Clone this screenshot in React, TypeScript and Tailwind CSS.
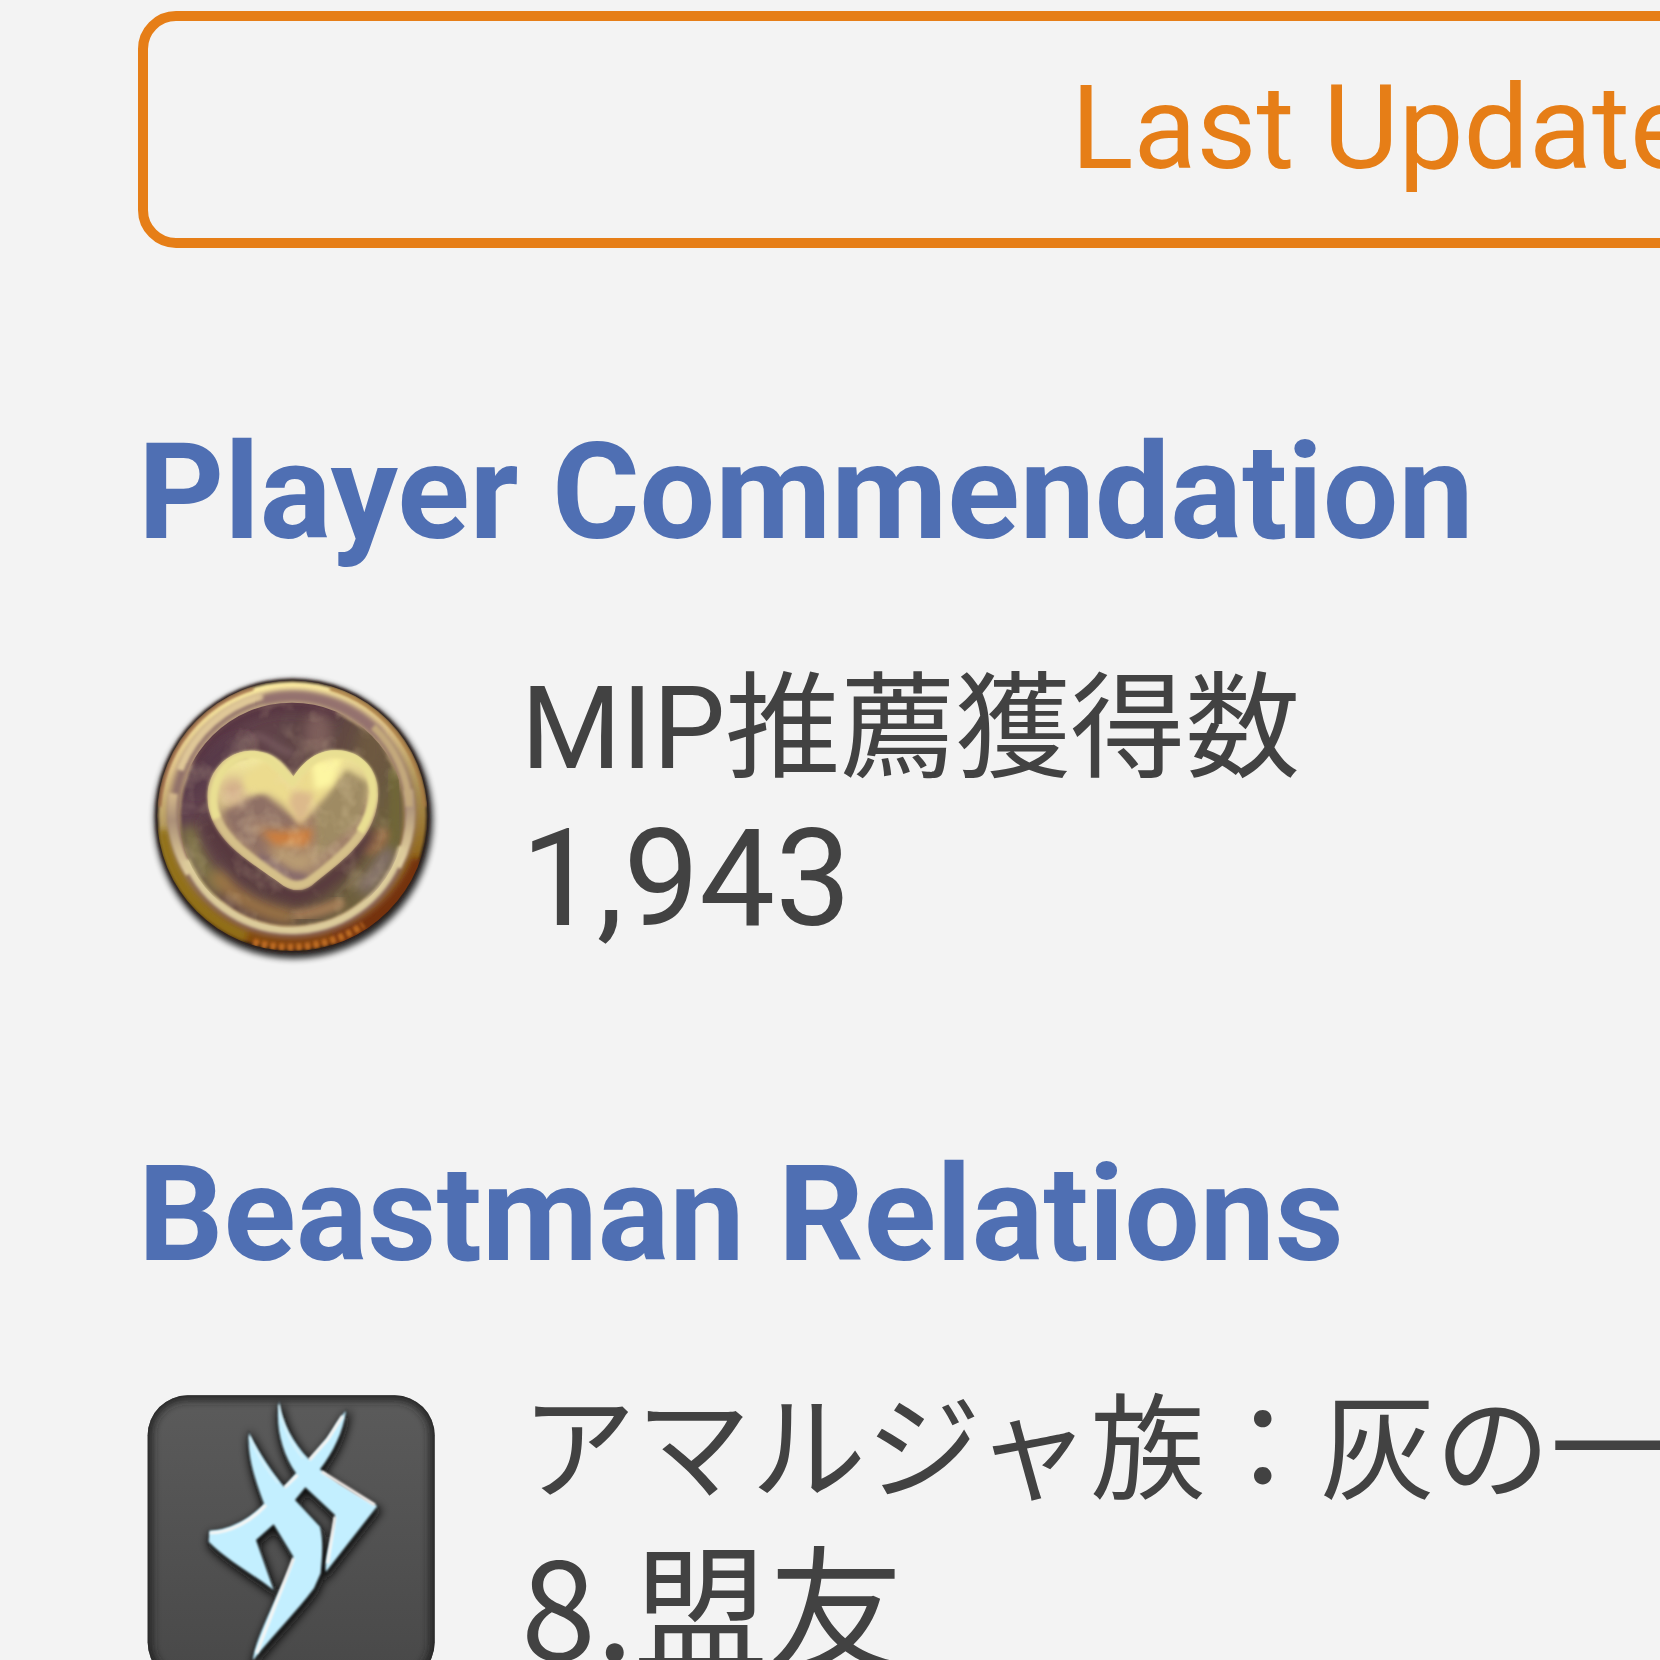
import type { ReactNode } from "react"

interface SectionProps {
  title: string;
  children: ReactNode;
}

interface EntryProps {
  icon: ReactNode;
  label: string;
  value: string;
  japaneseValue?: boolean;
}

const HEART = "M490 350 C460 300 420 270 360 272 C285 276 232 340 232 410 C234 540 355 600 460 677 Q505 705 545 677 C640 600 745 530 745 400 C745 325 690 270 620 270 C560 270 520 305 490 350Z"

const CommendationIcon = () => (
  <svg viewBox="51 39 864 864" className="w-full h-full overflow-visible" aria-hidden="true">
    <defs>
      <linearGradient id="rim" x1="0.4" y1="0" x2="0.6" y2="1">
        <stop offset="0" stopColor="#fff0a4" />
        <stop offset="0.25" stopColor="#e2c78c" />
        <stop offset="0.5" stopColor="#a98f52" />
        <stop offset="0.75" stopColor="#8f6419" />
        <stop offset="1" stopColor="#7d390b" />
      </linearGradient>
      <linearGradient id="ring" x1="0" y1="0" x2="0.2" y2="1">
        <stop offset="0" stopColor="#d9bd8d" />
        <stop offset="0.35" stopColor="#ab9078" />
        <stop offset="0.7" stopColor="#cdb78c" />
        <stop offset="1" stopColor="#e2cfa0" />
      </linearGradient>
      <linearGradient id="field" x1="0.1" y1="0.2" x2="1" y2="0.6">
        <stop offset="0" stopColor="#5f404e" />
        <stop offset="0.5" stopColor="#604644" />
        <stop offset="1" stopColor="#71653c" />
      </linearGradient>
      <linearGradient id="heart" x1="0.4" y1="0" x2="0.5" y2="1">
        <stop offset="0" stopColor="#f7eea0" />
        <stop offset="0.3" stopColor="#dcc98a" />
        <stop offset="0.5" stopColor="#a28268" />
        <stop offset="1" stopColor="#a0826d" />
      </linearGradient>
      <filter id="soft4" x="-20%" y="-20%" width="140%" height="140%"><feGaussianBlur stdDeviation="4" /></filter>
      <filter id="soft10" x="-30%" y="-30%" width="160%" height="160%"><feGaussianBlur stdDeviation="10" /></filter>
      <filter id="soft18" x="-50%" y="-50%" width="200%" height="200%"><feGaussianBlur stdDeviation="18" /></filter>
      <filter id="grain" x="0" y="0" width="100%" height="100%">
        <feTurbulence type="fractalNoise" baseFrequency="0.013" numOctaves="3" seed="4" />
        <feColorMatrix values="0 0 0 0 0.9  0 0 0 0 0.75  0 0 0 0 0.45  3 0 0 0 -1.45" />
      </filter>
      <clipPath id="coinClip"><circle cx="487" cy="467" r="406" /></clipPath>
      <clipPath id="fieldClip"><circle cx="486" cy="466" r="338" /></clipPath>
      <clipPath id="heartClip"><path d={HEART} /></clipPath>
    </defs>
    <circle cx="491" cy="478" r="418" fill="#000" opacity="0.8" filter="url(#soft10)" />
    <circle cx="487" cy="467" r="411" fill="#2b1d18" filter="url(#soft4)" />
    <g clipPath="url(#coinClip)">
      <circle cx="487" cy="467" r="402" fill="url(#rim)" filter="url(#soft4)" />
      <path d="M100 510 A390 390 0 0 0 350 830" fill="none" stroke="#927113" strokeWidth="34" filter="url(#soft10)" />
      <path d="M872 600 A390 390 0 0 1 610 842" fill="none" stroke="#74300e" strokeWidth="54" filter="url(#soft10)" />
      <path d="M370 846 A398 398 0 0 0 700 795" fill="none" stroke="#bb6a20" strokeWidth="22" strokeDasharray="17 9" filter="url(#soft4)" />
      <path d="M89 440 A398 398 0 0 1 370 86" fill="none" stroke="#9a6040" strokeWidth="8" filter="url(#soft4)" />
      <path d="M600 86 A398 398 0 0 1 884 440" fill="none" stroke="#aa7c43" strokeWidth="10" filter="url(#soft4)" />
      <circle cx="486" cy="463" r="353" fill="none" stroke="#8c6c68" strokeWidth="32" filter="url(#soft10)" />
      <path d="M130 400 A355 355 0 0 0 180 640 M800 620 A350 350 0 0 0 835 390" fill="none" stroke="url(#ring)" strokeWidth="28" filter="url(#soft4)" />
      <path d="M150 330 A360 360 0 0 1 400 108" fill="none" stroke="#dfc797" strokeWidth="22" filter="url(#soft4)" />
      <path d="M400 120 A350 350 0 0 1 750 225" fill="none" stroke="#94716f" strokeWidth="24" filter="url(#soft10)" />
      <path d="M730 200 A355 355 0 0 1 838 440" fill="none" stroke="#c3a87b" strokeWidth="22" filter="url(#soft4)" />
      <circle cx="486" cy="466" r="334" fill="url(#field)" filter="url(#soft4)" />
      <path d="M170 600 A342 342 0 0 0 815 560" fill="none" stroke="#dccb9a" strokeWidth="24" filter="url(#soft4)" />
    </g>
    <g clipPath="url(#fieldClip)">
      <path d="M175 300 A350 350 0 0 1 630 150" fill="none" stroke="#55303f" strokeWidth="70" filter="url(#soft18)" />
      <ellipse cx="565" cy="220" rx="40" ry="65" fill="#8a6965" opacity="0.7" filter="url(#soft18)" />
      <ellipse cx="725" cy="270" rx="45" ry="80" fill="#6d5940" filter="url(#soft18)" />
      <path d="M350 240 C400 200 430 275 490 280" fill="none" stroke="#795c61" strokeWidth="15" filter="url(#soft10)" />
      <path d="M785 330 Q815 460 780 560" fill="none" stroke="#6f6637" strokeWidth="34" filter="url(#soft10)" />
      <path d="M175 500 Q190 610 280 690" fill="none" stroke="#7f7446" strokeWidth="52" filter="url(#soft18)" />
      <path d="M255 640 Q300 700 370 735 T490 765" fill="none" stroke="#a07745" strokeWidth="42" filter="url(#soft18)" />
      <path d="M490 765 Q570 760 640 725" fill="none" stroke="#a27a55" strokeWidth="34" filter="url(#soft10)" />
      <path d="M690 690 Q755 640 775 565" fill="none" stroke="#82706a" strokeWidth="50" filter="url(#soft18)" />
      <ellipse cx="738" cy="545" rx="50" ry="28" fill="#98704a" transform="rotate(-45 738 545)" filter="url(#soft10)" />
      <path d="M235 480 C290 610 400 680 500 712 C590 690 650 620 720 510" fill="none" stroke="#57383e" strokeWidth="46" filter="url(#soft18)" />
      <path d="M195 400 C200 330 260 260 350 245" fill="none" stroke="#553746" strokeWidth="30" filter="url(#soft18)" />
      <rect x="150" y="130" width="672" height="672" filter="url(#grain)" opacity="0.18" />
    </g>
    <path d={HEART} fill="url(#heart)" filter="url(#soft4)" />
    <g clipPath="url(#heartClip)">
      <path d="M280 460 C320 420 380 400 400 400 C440 430 470 470 500 480 L500 620 C400 600 310 550 280 460Z" fill="#8f7065" filter="url(#soft10)" />
      <path d="M580 420 L650 330 L715 370 L695 480 L560 590 L555 460Z" fill="#9f8b64" filter="url(#soft10)" />
      <ellipse cx="310" cy="395" rx="35" ry="40" fill="#d3ad8b" filter="url(#soft18)" />
      <path d="M340 350 L410 300 L480 360 L540 290 L650 285 L590 400 L510 490 L455 425 L420 395 L350 400Z" fill="#ecdb8e" filter="url(#soft10)" />
      <path d="M545 310 L640 290 L605 375 L555 390Z" fill="#fdf6a2" filter="url(#soft10)" />
      <path d="M490 390 L550 400 L540 450 L510 500 L475 430Z" fill="#dcb98b" filter="url(#soft10)" />
      <path d="M365 490 L420 510 L550 505 L535 565 L440 575Z" fill="#b98355" filter="url(#soft18)" />
      <path d="M400 515 L460 520 L545 510 L530 555 L440 555Z" fill="#cc7d3c" filter="url(#soft10)" />
      <path d="M400 575 L470 560 L510 590 L570 560 L540 625 L490 635Z" fill="#bda074" filter="url(#soft18)" />
      <path d="M385 585 L480 645 L530 655" fill="none" stroke="#80636b" strokeWidth="20" filter="url(#soft10)" />
      <rect x="232" y="270" width="513" height="425" filter="url(#grain)" opacity="0.28" />
      <path d="M355 283 C285 285 246 345 246 410 C250 525 355 590 460 664 Q500 690 540 664 C640 585 729 520 729 400" fill="none" stroke="#d5c089" strokeWidth="27" filter="url(#soft4)" />
      <path d="M260 475 C243 435 240 340 320 295 Q370 270 420 300 L487 365 Q560 270 620 281 C690 282 731 330 730 405 Q725 460 690 515" fill="none" stroke="#e9df92" strokeWidth="24" filter="url(#soft4)" />
    </g>
  </svg>
)

const AmaljaaIcon = () => (
  <svg viewBox="51 45 864 864" className="w-full h-full" aria-hidden="true">
    <defs>
      <linearGradient id="tile" x1="0" y1="0" x2="0" y2="1">
        <stop offset="0" stopColor="#5b5b5b" />
        <stop offset="1" stopColor="#484848" />
      </linearGradient>
      <filter id="tileEdge"><feGaussianBlur stdDeviation="13" /></filter>
      <filter id="glyphShadow" x="-30%" y="-30%" width="160%" height="160%"><feGaussianBlur stdDeviation="14" /></filter>
      <filter id="glyphSoft"><feGaussianBlur stdDeviation="3" /></filter>
      <clipPath id="tileClip"><rect x="53" y="46" width="861" height="861" rx="120" /></clipPath>
      <path
        id="amaljaa"
        fillRule="evenodd"
        d="M447 63 C455 125 490 190 537 238 L590 175 C610 148 625 115 648 92 C640 155 610 215 570 268 C620 310 675 340 742 378 L588 575 C580 545 610 455 615 405 L526 322 L495 360 L570 440 C582 490 575 540 572 580 L552 625 C500 695 430 765 368 842 C375 770 465 610 490 530 L431 433 L378 480 L431 630 C365 580 290 540 236 485 L238 452 C300 450 360 415 402 372 C375 300 350 225 357 158 C385 215 425 275 462 320 L498 280 C455 220 435 135 447 63Z"
      />
    </defs>
    <g clipPath="url(#tileClip)">
      <rect x="51" y="45" width="864" height="864" fill="url(#tile)" />
      <rect x="49" y="43" width="868" height="868" rx="122" fill="none" stroke="#202020" strokeWidth="34" filter="url(#tileEdge)" />
      <use href="#amaljaa" x="5" y="14" fill="#111" stroke="#111" strokeWidth="12" filter="url(#glyphShadow)" />
      <use href="#amaljaa" x="0" y="3" fill="#181818" stroke="#1c2426" strokeWidth="5" opacity="0.6" filter="url(#glyphSoft)" />
      <use href="#amaljaa" fill="#c3efff" filter="url(#glyphSoft)" />
      <path
        d="M240 459 C300 458 362 425 408 375 M464 323 L503 285 M538 240 L592 180 L638 108 M575 275 L735 375 M615 410 L593 550 M491 535 L434 680 L380 820"
        fill="none"
        stroke="#fff7f2"
        strokeWidth="8"
        filter="url(#glyphSoft)"
      />
      <path d="M447 75 C455 135 485 195 520 235 M359 170 C385 235 415 275 445 310" fill="none" stroke="#e4f4f8" strokeWidth="4" filter="url(#glyphSoft)" />
    </g>
  </svg>
)

const Section = ({ title, children }: SectionProps) => (
  <section>
    <h2 className="mb-[85px] text-[134px] leading-[157px] font-bold whitespace-nowrap text-[#4f6fb3]">
      {title}
    </h2>
    {children}
  </section>
)

const Entry = ({ icon, label, value, japaneseValue }: EntryProps) => (
  <div className="flex items-start gap-[86px] pl-[9px]">
    <div className="mt-[17px] size-72 shrink-0">{icon}</div>
    <div className="whitespace-nowrap text-[#424242]">
      <p className="text-[115px] leading-[145px]">{label}</p>
      <p className={`text-[135px] leading-[157px] ${japaneseValue ? "font-['Noto_Sans_CJK_JP',sans-serif]" : ""}`}>
        {value}
      </p>
    </div>
  </div>
)

const App = () => {
  return (
    <main
      lang="ja"
      className="h-screen overflow-hidden bg-[#f3f3f3] pt-[11px] pl-[138px] font-[Roboto,'Noto_Sans_CJK_JP',sans-serif]"
    >
      <div className="-mr-12">
        <button
          type="button"
          className="block w-full rounded-[38px] border-[10px] border-[#e67e17] pt-[40px] pb-[42px] pl-[923px] text-left text-[116px] leading-[135px] whitespace-nowrap text-[#e67e17]"
        >
          Last Update
        </button>
      </div>
      <div className="mt-[166px] flex flex-col gap-[175px]">
        <Section title="Player Commendation">
          <Entry icon={<CommendationIcon />} label="MIP推薦獲得数" value="1,943" />
        </Section>
        <Section title="Beastman Relations">
          <Entry icon={<AmaljaaIcon />} label="アマルジャ族：灰の一" value="8.盟友" japaneseValue />
        </Section>
      </div>
    </main>
  )
}

export default App
